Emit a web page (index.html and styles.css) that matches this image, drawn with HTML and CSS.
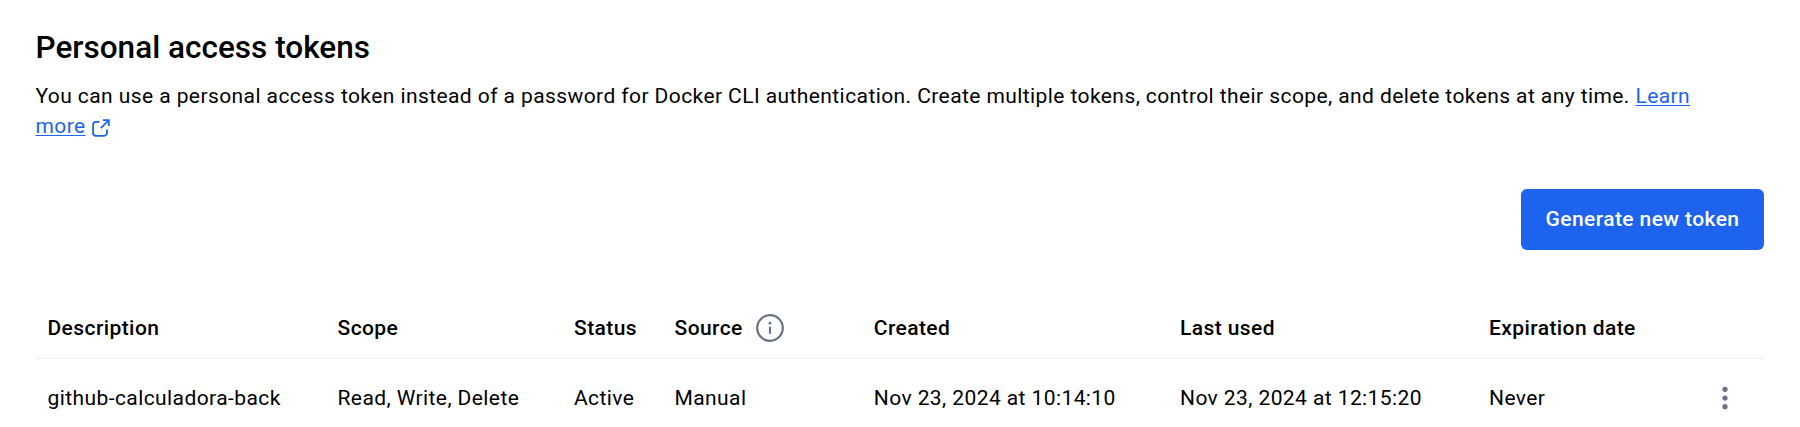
FILE: index.html
```html
<!DOCTYPE html>
<html lang="en">
<head>
<meta charset="utf-8">
<title>Personal access tokens</title>
<link rel="stylesheet" href="styles.css">
</head>
<body>
<main class="page">
  <h1 class="title">Personal access tokens</h1>
  <p class="intro">You can use a personal access token instead of a password for Docker CLI authentication. Create multiple tokens, control their scope, and delete tokens at any time. <a class="link" href="#">Learn more</a><svg class="external" viewBox="0 0 18 18" fill="none" stroke="currentColor" stroke-width="1.800"><path d="M7.500 2.900H4A2.900 2.900 0 0 0 1.100 5.800V13.900A2.900 2.900 0 0 0 4 16.800H12.100A2.900 2.900 0 0 0 15 13.900V10.500M11 1.100H16.800V6.900M16.500 1.400 8.800 9.100"/></svg></p>
  <div class="actions"><button class="generate">Generate new token</button></div>
  <div class="table">
    <div class="row head">
      <span>Description</span><span>Scope</span><span>Status</span>
      <span class="source">Source <svg class="info" viewBox="0 0 28 28" fill="none" stroke="currentColor" stroke-width="2.200"><circle cx="14" cy="14" r="12.800"/><path d="M14 12.800v7"/><circle cx="14" cy="9.200" r="1.400" fill="currentColor" stroke="none"/></svg></span>
      <span>Created</span><span>Last used</span><span>Expiration date</span><span></span>
    </div>
    <div class="row">
      <span>github-calculadora-back</span><span>Read, Write, Delete</span><span>Active</span><span>Manual</span>
      <span>Nov 23, 2024 at 10:14:10</span><span>Nov 23, 2024 at 12:15:20</span><span>Never</span>
      <svg class="more" viewBox="0 0 6 24" fill="currentColor"><circle cx="3" cy="3.300" r="2.600"/><circle cx="3" cy="12" r="2.600"/><circle cx="3" cy="20.700" r="2.600"/></svg>
    </div>
  </div>
</main>
</body>
</html>
```
FILE: styles.css
```css
body { margin: 0; background: #fff; color: #000; font: 21px/30px Roboto, sans-serif; letter-spacing: 0.415px; }
.page { padding: 28px 36px 0 35.5px; }
.title { margin: 0; font-size: 31.5px; line-height: 40px; font-weight: 500; letter-spacing: 0.02px; }
.intro { margin: 13px 50px 0 0; }
.link { color: #1d63ed; text-decoration-thickness: 1px; text-underline-offset: 2px; }
.external { width: 18px; height: 18px; margin-left: 6px; color: #1d63ed; vertical-align: -3.5px; }
.actions { display: flex; justify-content: flex-end; margin-top: 48px; }
.generate { width: 243px; height: 61px; padding: 0 0 2px; border: 0; border-radius: 6px; background: #1d63ed; color: #fff; font: 500 21px/30px Roboto, sans-serif; letter-spacing: 0.415px; }
.table { margin-top: 48px; }
.row { display: grid; grid-template-columns: 290px 236.5px 100.500px 199.300px 306.200px 309px 233px 1fr; align-items: center; height: 78px; padding-left: 12px; white-space: nowrap; }
.head { height: 60px; font-weight: 500; border-bottom: 1px solid #f0f1f3; }
.source { display: flex; align-items: center; gap: 13px; }
.info { width: 28px; height: 28px; color: #677285; }
.more { width: 6px; height: 24px; color: #677285; }
```
